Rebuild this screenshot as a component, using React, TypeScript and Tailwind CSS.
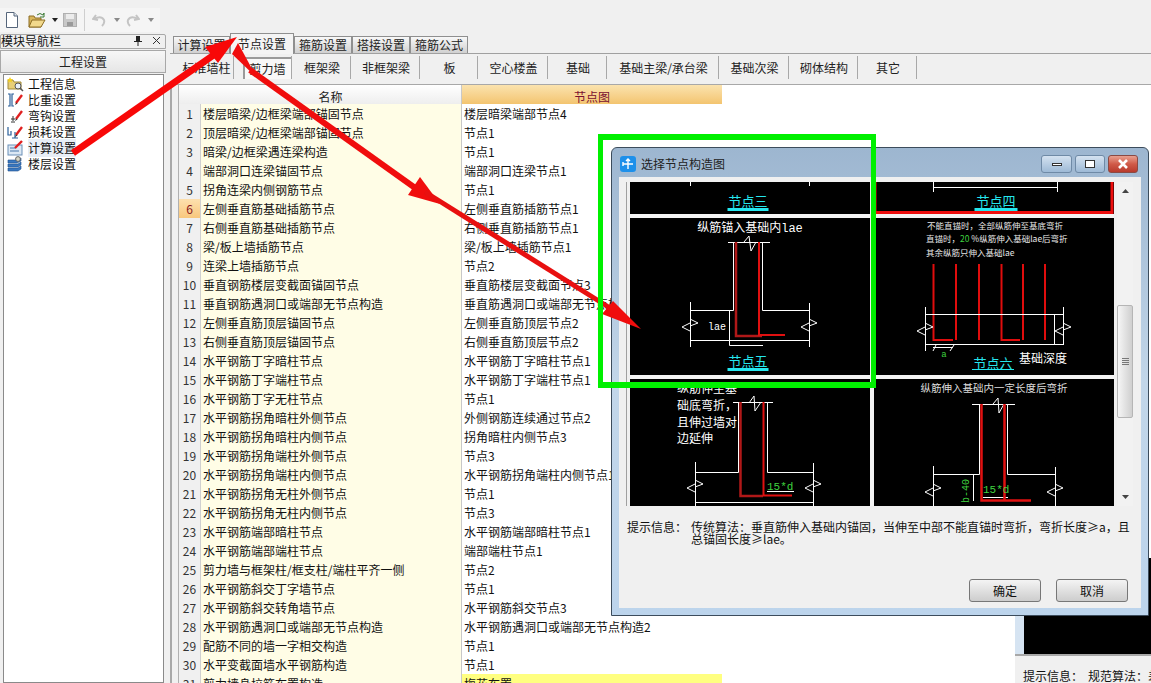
const rows: [string, string][] = [
  ["楼层暗梁/边框梁端部锚固节点", "楼层暗梁端部节点4"],
  ["顶层暗梁/边框梁端部锚固节点", "节点1"],
  ["暗梁/边框梁遇连梁构造", "节点1"],
  ["端部洞口连梁锚固节点", "端部洞口连梁节点1"],
  ["拐角连梁内侧钢筋节点", "节点1"],
  ["左侧垂直筋基础插筋节点", "左侧垂直筋插筋节点1"],
  ["右侧垂直筋基础插筋节点", "右侧垂直筋插筋节点1"],
  ["梁/板上墙插筋节点", "梁/板上墙插筋节点1"],
  ["连梁上墙插筋节点", "节点2"],
  ["垂直钢筋楼层变截面锚固节点", "垂直筋楼层变截面节点3"],
  ["垂直钢筋遇洞口或端部无节点构造", "垂直筋遇洞口或端部无节点构造"],
  ["左侧垂直筋顶层锚固节点", "左侧垂直筋顶层节点2"],
  ["右侧垂直筋顶层锚固节点", "右侧垂直筋顶层节点2"],
  ["水平钢筋丁字暗柱节点", "水平钢筋丁字暗柱节点1"],
  ["水平钢筋丁字端柱节点", "水平钢筋丁字端柱节点1"],
  ["水平钢筋丁字无柱节点", "节点1"],
  ["水平钢筋拐角暗柱外侧节点", "外侧钢筋连续通过节点2"],
  ["水平钢筋拐角暗柱内侧节点", "拐角暗柱内侧节点3"],
  ["水平钢筋拐角端柱外侧节点", "节点3"],
  ["水平钢筋拐角端柱内侧节点", "水平钢筋拐角端柱内侧节点1"],
  ["水平钢筋拐角无柱外侧节点", "节点1"],
  ["水平钢筋拐角无柱内侧节点", "节点3"],
  ["水平钢筋端部暗柱节点", "水平钢筋端部暗柱节点1"],
  ["水平钢筋端部端柱节点", "端部端柱节点1"],
  ["剪力墙与框架柱/框支柱/端柱平齐一侧", "节点2"],
  ["水平钢筋斜交丁字墙节点", "节点1"],
  ["水平钢筋斜交转角墙节点", "水平钢筋斜交节点3"],
  ["水平钢筋遇洞口或端部无节点构造", "水平钢筋遇洞口或端部无节点构造2"],
  ["配筋不同的墙一字相交构造", "节点1"],
  ["水平变截面墙水平钢筋构造", "节点1"],
  ["剪力墙身拉筋布置构造", "梅花布置"],
]

const subTabs = [
  { label: "标准墙柱", w: "w-[56px]" },
  { label: "剪力墙", w: "w-[58px]", active: true },
  { label: "框架梁", w: "w-[59px]" },
  { label: "非框架梁", w: "w-[69px]" },
  { label: "板", w: "w-[58px]" },
  { label: "空心楼盖", w: "w-[70px]" },
  { label: "基础", w: "w-[59px]" },
  { label: "基础主梁/承台梁", w: "w-[112px]" },
  { label: "基础次梁", w: "w-[70px]" },
  { label: "砌体结构", w: "w-[69px]" },
  { label: "其它", w: "w-[59px]" },
]

const tabs = [
  { label: "计算设置", w: "w-[57px]" },
  { label: "节点设置", w: "w-[64px]", active: true },
  { label: "箍筋设置", w: "w-[58px]" },
  { label: "搭接设置", w: "w-[58px]" },
  { label: "箍筋公式", w: "w-[58px]" },
]

const RED = "#e00d0d"
const DARK_RED = "#b01818"
const GREEN = "#3fd23f"
const CYAN = "#25e6ee"
const MONO = "'Liberation Mono', 'Noto Sans CJK SC', monospace"
const CJK = "'Noto Sans CJK SC', sans-serif"

function Pencil() {
  return (
    <g>
      <path d="M9 11 L15 3" stroke="#e02020" strokeWidth="2.4" />
      <path d="M8 13 L9 10.5 L10.5 11.5 Z" fill="#333" />
    </g>
  )
}

function NavIcon({ kind }: { kind: number }) {
  return (
    <svg width="17" height="16" viewBox="0 0 17 16" className="shrink-0">
      {kind === 0 && (
        <g>
          <path d="M1 4 H6 L7 6 H14 V13 H1 Z" fill="#e8cf78" stroke="#a08a3a" />
          <path d="M3 1 L4 3 L6 3 L4.5 4.5 L5 6.5 L3 5.5 L1 6.5 L1.5 4.5 L0 3 L2 3 Z" fill="#f4d020" />
          <circle cx="11" cy="10" r="3" fill="#e8f0f8" stroke="#555" />
          <path d="M13 12 L16 15" stroke="#555" strokeWidth="1.5" />
        </g>
      )}
      {kind === 1 && (
        <g>
          <path d="M1 2 H3 V14 H1 M7 2 H5 V14 H7" fill="none" stroke="#2a5f9a" strokeWidth="1.2" />
          <Pencil />
        </g>
      )}
      {kind === 2 && (
        <g>
          <path d="M6 8 V13 M4 14 H8 M4 11 H8" fill="none" stroke="#333" />
          <Pencil />
        </g>
      )}
      {kind === 3 && (
        <g>
          <path d="M1 3 V11 H4 V7 M5 14 H8 V8 M8 14 H11" fill="none" stroke="#2a5f9a" strokeWidth="1.2" />
          <Pencil />
        </g>
      )}
      {kind === 4 && (
        <g>
          <rect x="1" y="5" width="14" height="10" fill="#dce8f4" stroke="#6b90b8" />
          <path d="M3 8 H9 M3 11 H12" stroke="#4a78aa" />
          <path d="M8 8 L15 1" stroke="#e02020" strokeWidth="2.4" />
        </g>
      )}
      {kind === 5 && (
        <g>
          <path d="M1 4 H10 L14 2 V5 L10 7 H1 Z M1 8 H11 L14 6 V9 L11 11 H1 Z M1 12 H11 L14 10 V13 L11 15 H1 Z" fill="#3a78c0" stroke="#1f4f8a" strokeWidth="0.6" />
          <circle cx="11" cy="3" r="2.4" fill="#d8d8c8" stroke="#666" />
        </g>
      )}
    </svg>
  )
}

function Toolbar() {
  return (
    <div className="h-[34px] pt-[8px]">
      <div className="flex h-[24px] w-[160px] items-center bg-[#f5f5f5] pl-[5px]">
        <svg width="14" height="16" viewBox="0 0 14 16">
          <path d="M1.5 .5 H9 L12.5 4 V15.5 H1.5 Z" fill="#fff" stroke="#55657a" />
          <path d="M9 .5 V4 H12.5" fill="#dfe6ee" stroke="#55657a" />
        </svg>
        <svg width="18" height="16" viewBox="0 0 18 16" className="ml-[9px]">
          <path d="M1 4 H6 L7 6 H13 V15 H1 Z" fill="#d9b65c" stroke="#8c6d24" />
          <path d="M1 15 L4 8 H17 L13 15 Z" fill="#f2d98c" stroke="#8c6d24" />
          <path d="M9 3 Q12 0 15 3 L16 1 V5 H12" fill="none" stroke="#3a7a34" />
        </svg>
        <svg width="6" height="4" viewBox="0 0 6 4" className="ml-[6px]"><path d="M0 0 H6 L3 4 Z" fill="#222" /></svg>
        <svg width="14" height="14" viewBox="0 0 14 14" className="ml-[5px]">
          <rect x=".5" y=".5" width="13" height="13" fill="#c8c8c8" stroke="#b0b0b0" />
          <rect x="3" y="1" width="8" height="5" fill="#ececec" />
          <rect x="4" y="9" width="6" height="4" fill="#9a9a9a" />
        </svg>
        <div className="ml-[7px] h-[22px] w-[1px] bg-[#cfcfcf]" />
        <svg width="15" height="13" viewBox="0 0 15 13" className="ml-[7px]">
          <path d="M4 1 L1 5 L6 6 M2 5 Q9 1 12 6 Q13 9 10 12" fill="none" stroke="#c4c4c4" strokeWidth="2" />
        </svg>
        <svg width="6" height="4" viewBox="0 0 6 4" className="ml-[7px]"><path d="M0 0 H6 L3 4 Z" fill="#8a8a8a" /></svg>
        <svg width="15" height="13" viewBox="0 0 15 13" className="ml-[5px]">
          <path d="M11 1 L14 5 L9 6 M13 5 Q6 1 3 6 Q2 9 5 12" fill="none" stroke="#c4c4c4" strokeWidth="2" />
        </svg>
        <svg width="6" height="4" viewBox="0 0 6 4" className="ml-[8px]"><path d="M0 0 H6 L3 4 Z" fill="#8a8a8a" /></svg>
      </div>
    </div>
  )
}

function NavPanel() {
  const items = ["工程信息", "比重设置", "弯钩设置", "损耗设置", "计算设置", "楼层设置"]
  return (
    <aside className="flex w-[166px] shrink-0 flex-col">
      <div className="flex h-[15px] items-center justify-between rounded-t-[2px] border border-[#a8a8a8] pb-[2px] pr-[4px] leading-none text-[#111]">
        <span>模块导航栏</span>
        <span className="flex items-center gap-[10px]">
          <svg width="8" height="10" viewBox="0 0 8 10"><path d="M2 0 H6 V5 H8 V6 H4.5 V10 H3.5 V6 H0 V5 H2 Z" fill="#222" /></svg>
          <svg width="9" height="9" viewBox="0 0 9 9"><path d="M1 1 L8 8 M8 1 L1 8" stroke="#333" /></svg>
        </span>
      </div>
      <div className="mt-[1px] flex h-[23px] items-center justify-center border border-[#a8a8a8] bg-gradient-to-b from-[#f7f7f7] to-[#e6e6e6] text-[#222]">
        工程设置
      </div>
      <div className="ml-[3px] mr-[2px] mt-[1px] flex-1 border border-[#8a8a8a] bg-white pl-[3px] pt-[1px]">
        {items.map((item, i) => (
          <div key={item} className="flex h-[16px] items-center gap-[4px] text-[#111]">
            <NavIcon kind={i} />
            <span className={i === 4 ? "bg-[#e8eef6]" : ""}>{item}</span>
          </div>
        ))}
      </div>
    </aside>
  )
}

function DataTable() {
  return (
    <div className="w-[544px] shrink-0">
      <div className="grid h-[19px] grid-cols-[22px_261px_261px] border-b border-[#c4c4c4]">
        <div className="border-l border-[#b0b0b0] bg-gradient-to-b from-white to-[#ececec]" />
        <div className="flex items-center justify-center bg-gradient-to-b from-white to-[#ececec] pt-[3px] text-[#222]">名称</div>
        <div className="flex items-center justify-center border-l border-[#c8c8c8] bg-gradient-to-b from-[#fbe3ae] to-[#f2c168] pt-[3px] text-[#7a1030]">节点图</div>
      </div>
      {rows.map(([name, node], i) => (
        <div key={i} className="grid h-[19px] grid-cols-[22px_261px_261px] border-b border-[#c4c4c4] leading-[20px]">
          <div className={i === 5 ? "border-l border-[#b0b0b0] bg-gradient-to-b from-[#fde0ae] to-[#f8c67a] text-center text-[#8a1a20]" : "border-l border-[#b0b0b0] bg-[#f0f0f0] text-center text-[#333]"}>{i + 1}</div>
          <div className="overflow-hidden whitespace-nowrap border-l border-[#d0d0d0] bg-[#fffde6] pl-[2px] text-[#111]">{name}</div>
          <div className={`overflow-hidden whitespace-nowrap border-l border-[#c8c8c8] pl-[2px] text-[#111] ${i === 30 ? "bg-[#ffff80]" : "bg-white"}`}>{node}</div>
        </div>
      ))}
    </div>
  )
}

function Brk({ x, y }: { x: number; y: number }) {
  return (
    <path
      d={`M${x - 8} ${y + 2} L${x} ${y - 2} M${x - 8} ${y + 2} L${x} ${y + 6} M${x} ${y - 6} L${x + 8} ${y - 2} L${x} ${y + 1}`}
      fill="none"
      stroke="#fff"
    />
  )
}

function Label({ x, y, text, thin, uw }: { x: number; y: number; text: string; thin?: boolean; uw: number }) {
  return (
    <g>
      <text x={x} y={y} textAnchor="middle" fontSize="13" fill={CYAN} fontFamily={CJK}>{text}</text>
      <rect x={x - uw / 2} y={y + (thin ? 1 : 2)} width={uw} height={thin ? 1 : 3} fill={CYAN} />
    </g>
  )
}

function Panel({ x, y, w, h, children }: { x: number; y: number; w: number; h: number; children?: React.ReactNode }) {
  return (
    <svg width={w} height={h} viewBox={`${x} ${y} ${w} ${h}`} className="block bg-black">
      {children}
    </svg>
  )
}

function Diagrams() {
  return (
    <div className="grid grid-cols-[240px_240px] grid-rows-[32px_157px_127px] gap-[4px] bg-[#f4f4f4]">
      <Panel x={630} y={182} w={240} h={32}>
        <path d="M690.5 182 V186 M809.5 182 V186" stroke="#fff" />
        <Label x={748} y={206} text="节点三" uw={41} />
      </Panel>
      <Panel x={874} y={182} w={240} h={32}>
        <path d="M933.5 182 V192 M1057.5 182 V192 M933 187.5 H1058" stroke="#fff" />
        <path d="M875 182 V212.5 H1112 V182" fill="none" stroke="#ee0d0d" strokeWidth="3" />
        <Label x={996} y={206} text="节点四" uw={43} />
      </Panel>

      <Panel x={630} y={218} w={240} h={157}>
        <text x={750} y={232} textAnchor="middle" fontSize="12" fill="#fff" fontFamily={MONO}>纵筋锚入基础内lae</text>
        <path d="M728 242.5 H770 M733.5 242 V310.5 H690 M762.5 242 V310.5 H809 M690.5 302 V347 M809.5 303 V347 M690 340.5 H809 M729.5 310 V345.5 H763 M744 242 L749 236 L751 251 L756 242" fill="none" stroke="#fff" />
        <Brk x={690} y={325} />
        <Brk x={809} y={325} />
        <text x={708} y={330} fontSize="10" fill="#fff" fontFamily={MONO}>lae</text>
        <path d="M736 242 V336 H762" fill="none" stroke={DARK_RED} strokeWidth="2.5" />
        <path d="M759 242 V335 H785" fill="none" stroke="#e01010" strokeWidth="2" />
        <Label x={748} y={366} text="节点五" uw={41} />
      </Panel>

      <Panel x={874} y={218} w={240} h={157}>
        <g fontSize="8.5" fill="#e8e8e8" fontFamily={CJK}>
          <text x={927} y={229}>不能直锚时，全部纵筋伸至基底弯折</text>
          <text x={926} y={242}>直锚时，<tspan fill={GREEN}>20</tspan> %纵筋伸入基础lae后弯折</text>
          <text x={926} y={256}>其余纵筋只伸入基础lae</text>
        </g>
        <path d="M933.5 264 V340 H953 M1001.5 264 V340 H1020" fill="none" stroke={RED} strokeWidth="2" />
        <path d="M956 264 V340 M979 264 V340 M1023 264 V340 M1045 264 V340" stroke={RED} strokeWidth="2" />
        <path d="M925 314.5 H1064 M925 344.5 H1064 M925.5 307 V351 M1063.5 307 V345 M1054.5 314 V344 M933 347.5 H953 M933 351 L936 345 M950 351 L954 345" fill="none" stroke="#fff" />
        <Brk x={925} y={329} />
        <Brk x={1063} y={329} />
        <text x={944} y={357} textAnchor="middle" fontSize="9" fill={GREEN} fontFamily={MONO}>a</text>
        <text x={1019} y={363} fontSize="12" fill="#fff" fontFamily={CJK}>基础深度</text>
        <Label x={993} y={368} text="节点六" thin uw={42} />
      </Panel>

      <Panel x={630} y={379} w={240} h={127}>
        <g fontSize="12" fill="#fff" fontFamily={CJK}>
          <text x={677} y={393}>纵筋伸至基</text>
          <text x={677} y={410}>础底弯折，</text>
          <text x={677} y={427}>且伸过墙对</text>
          <text x={677} y={443}>边延伸</text>
        </g>
        <path d="M733 402.5 H773 M738.5 402 V472.5 H695 M767.5 402 V472.5 H813 M695.5 462 V506 M813.5 463 V506 M695 502.5 H813 M767 491.5 H794 M749 403 L754 396 L755 411 L761 402" fill="none" stroke="#fff" />
        <Brk x={695} y={486} />
        <Brk x={813} y={486} />
        <path d="M740.5 402 V496 H763" fill="none" stroke={DARK_RED} strokeWidth="2.5" />
        <path d="M763.5 402 V495.5 H792" fill="none" stroke="#e01010" strokeWidth="2" />
        <text x={767} y={490} fontSize="11" fill={GREEN} fontFamily={MONO}>15*d</text>
      </Panel>

      <Panel x={874} y={379} w={240} h={127}>
        <text x={994} y={392} textAnchor="middle" fontSize="10.5" fill="#ddd" fontFamily={CJK}>纵筋伸入基础内一定长度后弯折</text>
        <path d="M972 404.5 H1015 M979.5 404 V474.5 H933 M1007.5 404 V474.5 H1055 M933.5 466 V506 M1055.5 467 V506 M973.5 474 V501 M983 497.5 H1008 M993 404 L998 398 L999 413 L1004 404" fill="none" stroke="#fff" />
        <Brk x={933} y={490} />
        <Brk x={1055} y={490} />
        <path d="M981.5 404 V500.5 H1031 M1004.5 404 V500" fill="none" stroke="#e01010" strokeWidth="2.5" />
        <text x={983} y={493} fontSize="11" fill={GREEN} fontFamily={MONO}>15*d</text>
        <text x={969} y={503} fontSize="10" fill={GREEN} fontFamily={MONO} transform="rotate(-90 969 503)">b-40</text>
      </Panel>
    </div>
  )
}

function ScrollBar() {
  return (
    <div className="ml-[3px] flex h-[324px] w-[16px] flex-col bg-[#f2f2f2]">
      <div className="flex h-[18px] items-center justify-center">
        <svg width="7" height="4" viewBox="0 0 7 4"><path d="M3.5 0 L7 4 H0 Z" fill="#444" /></svg>
      </div>
      <div className="mt-[105px] flex h-[113px] items-center justify-center rounded-[2px] border border-[#b5b5b5] bg-gradient-to-r from-[#f6f6f6] to-[#cfcfcf]">
        <div className="flex flex-col gap-[1px]">
          <div className="h-[1px] w-[7px] bg-[#777]" />
          <div className="h-[1px] w-[7px] bg-[#777]" />
          <div className="h-[1px] w-[7px] bg-[#777]" />
          <div className="h-[1px] w-[7px] bg-[#777]" />
        </div>
      </div>
      <div className="mt-auto flex h-[18px] items-center justify-center">
        <svg width="7" height="4" viewBox="0 0 7 4"><path d="M0 0 H7 L3.5 4 Z" fill="#444" /></svg>
      </div>
    </div>
  )
}

function WinButton({ w, children, close }: { w: string; children: React.ReactNode; close?: boolean }) {
  return (
    <div className={`flex h-[18px] items-center justify-center rounded-[3px] border ${w} ${close ? "border-[#8a4a44] bg-gradient-to-b from-[#e8a090] via-[#d05a48] to-[#b83a2c]" : "border-[#6f8aa6] bg-gradient-to-b from-[#d4e2f0] to-[#9ebad6]"}`}>
      {children}
    </div>
  )
}

function Dialog() {
  return (
    <div className="absolute left-[611px] top-[147px] flex h-[469px] w-[538px] flex-col rounded-t-[6px] border border-[#3c4c5c] bg-gradient-to-b from-[#9db6d0] via-[#c2d6e9] to-[#bcd4ec]">
      <div className="flex h-[29px] shrink-0 items-center pl-[8px] pr-[10px] pt-[3px]">
        <div className="flex h-[16px] w-[16px] items-center justify-center rounded-[3px] bg-[#1e90ea]">
          <svg width="12" height="12" viewBox="0 0 12 12"><path d="M6 1 V11 M1 6 H11 M4 3 L6 1 L8 3 M1 4 V8" fill="none" stroke="#fff" strokeWidth="1.4" /></svg>
        </div>
        <span className="ml-[5px] text-[#222]">选择节点构造图</span>
        <div className="ml-auto flex gap-[3px]">
          <WinButton w="w-[31px]"><div className="h-[3px] w-[10px] border border-[#333] bg-white" /></WinButton>
          <WinButton w="w-[30px]"><div className="h-[8px] w-[10px] border border-[#333] bg-white" /></WinButton>
          <WinButton w="w-[30px]" close>
            <svg width="12" height="10" viewBox="0 0 12 10"><path d="M2 1 L10 9 M10 1 L2 9" stroke="#fff" strokeWidth="2.6" /></svg>
          </WinButton>
        </div>
      </div>
      <div className="mx-[7px] mb-[7px] flex flex-1 flex-col bg-[#f0f0f0]">
        <div className="mt-[5px] flex">
          <div className="ml-[7px] border-l border-[#a0a0a0] pl-[3px]">
            <Diagrams />
          </div>
          <ScrollBar />
        </div>
        <div className="ml-[8px] mr-[4px] mt-[15px] flex whitespace-nowrap leading-[12px] text-[#111]">
          <span className="w-[64px] shrink-0">提示信息：</span>
          <span>
            传统算法：垂直筋伸入基础内锚固，当伸至中部不能直锚时弯折，弯折长度≥a，且
            <br />
            总锚固长度≥lae。
          </span>
        </div>
        <div className="mt-auto flex justify-end gap-[15px] pb-[6px] pr-[13px]">
          <button className="h-[23px] w-[72px] rounded-[3px] border border-[#777] bg-gradient-to-b from-[#f4f4f4] to-[#cdcdcd] text-[#111]">确定</button>
          <button className="h-[23px] w-[72px] rounded-[3px] border border-[#777] bg-gradient-to-b from-[#f4f4f4] to-[#cdcdcd] text-[#111]">取消</button>
        </div>
      </div>
    </div>
  )
}

function Annotations() {
  return (
    <>
      <svg width="1151" height="683" viewBox="0 0 1151 683" className="pointer-events-none absolute left-0 top-0">
        <path d="M73 153 L218 52" stroke="#f80808" strokeWidth="7" />
        <polygon points="237,37 205,47 218,63" fill="#f80808" />
        <path d="M250 70 L418 190" stroke="#f00d0d" strokeWidth="6" />
        <polygon points="238,43 232,54 257,78" fill="#f00d0d" />
        <polygon points="440,204 420,177 408,195" fill="#f00d0d" />
        <path d="M425 192 L610 308" stroke="#e81010" strokeWidth="5" />
        <polygon points="641,329 613,301 602,314" fill="#f00d0d" />
      </svg>
      <div className="pointer-events-none absolute left-[598px] top-[134px] h-[254px] w-[278px] border-[5px] border-t-[6px] border-[#00f000] border-b-[6px]" />
    </>
  )
}

export default function App() {
  return (
    <div className="relative h-[683px] w-[1151px] overflow-hidden bg-[#f0f0f0] font-['Noto_Sans_CJK_SC',sans-serif] text-[12px]">
      <Toolbar />
      <div className="flex h-[649px]">
        <NavPanel />
        <main className="ml-[4px] flex min-w-0 flex-1 flex-col">
          <div className="flex h-[20px] shrink-0 items-end border-b border-[#a0a0a0] pl-[3px]">
            {tabs.map((t) => (
              <div
                key={t.label}
                className={`flex items-center justify-center border border-b-0 border-[#8f8f8f] text-[#222] ${t.w} ${t.active ? "-mb-[1px] h-[21px] bg-[#f4f4f4]" : "h-[17px] bg-gradient-to-b from-[#f8f8f8] to-[#d0d0d0]"}`}
              >
                {t.label}
              </div>
            ))}
          </div>
          <div className="flex h-[31px] shrink-0 items-start border-b border-[#a8a8a8] pl-[8px] pt-[2px]">
            {subTabs.map((t) => (
              <div key={t.label} className={`flex h-[23px] items-center justify-center border-r border-[#a8a8a8] pl-[2px] text-[#222] ${t.w}`}>
                {t.active ? (
                  <div className="ml-[6px] flex h-[22px] w-[48px] items-center justify-center border-l-2 border-t-2 border-[#9a9a9a] bg-[#f8f8f8]">{t.label}</div>
                ) : (
                  t.label
                )}
              </div>
            ))}
          </div>
          <div className="flex min-h-0 flex-1 bg-white">
            <div className="w-[8px] shrink-0 border-l-2 border-[#a8a8a8] bg-[#f0f0f0]" />
            <DataTable />
            <div className="flex-1" />
            <div className="flex w-[136px] shrink-0 flex-col">
              <div className="flex-1 bg-white" />
              <div className="flex h-[98px] border-b-2 border-[#a8a8a8]">
                <div className="w-[9px] bg-[#d6e4f2]" />
                <div className="flex-1 bg-black" />
              </div>
              <div className="flex h-[27px] items-end whitespace-nowrap bg-[#f0f0f0] pl-[8px] leading-[14px] text-[#111]">
                <span className="w-[65px] shrink-0">提示信息：</span>
                <span>规范算法：差</span>
              </div>
            </div>
          </div>
        </main>
      </div>
      <Dialog />
      <Annotations />
    </div>
  )
}
